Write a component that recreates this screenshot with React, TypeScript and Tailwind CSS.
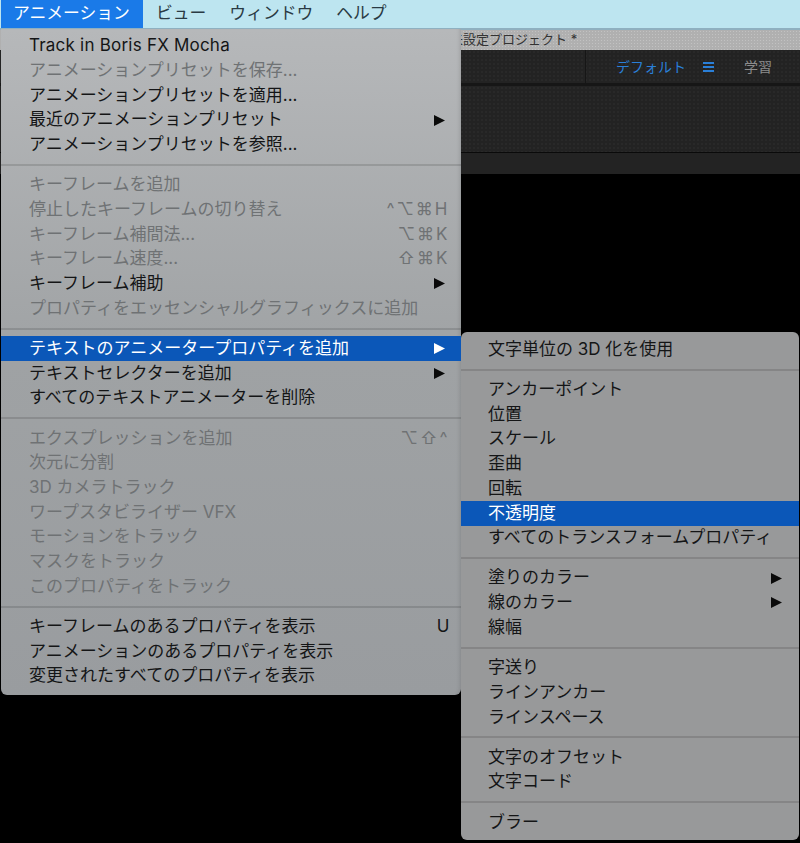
import React from "react";

type Item = {
  label: string;
  disabled?: boolean;
  shortcut?: string;
  arrow?: boolean;
  active?: boolean;
  tracking?: string;
};

const mainMenu: Item[][] = [
  [
    { label: "Track in Boris FX Mocha", tracking: "tracking-[0.22px]" },
    { label: "アニメーションプリセットを保存...", disabled: true },
    { label: "アニメーションプリセットを適用..." },
    { label: "最近のアニメーションプリセット", arrow: true },
    { label: "アニメーションプリセットを参照..." },
  ],
  [
    { label: "キーフレームを追加", disabled: true },
    { label: "停止したキーフレームの切り替え", disabled: true, shortcut: "^⌥⌘H" },
    { label: "キーフレーム補間法...", disabled: true, shortcut: "⌥⌘K" },
    { label: "キーフレーム速度...", disabled: true, shortcut: "⇧⌘K" },
    { label: "キーフレーム補助", arrow: true },
    { label: "プロパティをエッセンシャルグラフィックスに追加", disabled: true },
  ],
  [
    { label: "テキストのアニメータープロパティを追加", arrow: true, active: true },
    { label: "テキストセレクターを追加", arrow: true },
    { label: "すべてのテキストアニメーターを削除" },
  ],
  [
    { label: "エクスプレッションを追加", disabled: true, shortcut: "⌥⇧^" },
    { label: "次元に分割", disabled: true },
    { label: "3D カメラトラック", disabled: true },
    { label: "ワープスタビライザー VFX", disabled: true },
    { label: "モーションをトラック", disabled: true },
    { label: "マスクをトラック", disabled: true },
    { label: "このプロパティをトラック", disabled: true },
  ],
  [
    { label: "キーフレームのあるプロパティを表示", shortcut: "U" },
    { label: "アニメーションのあるプロパティを表示" },
    { label: "変更されたすべてのプロパティを表示" },
  ],
];

const subMenu: Item[][] = [
  [{ label: "文字単位の 3D 化を使用" }],
  [
    { label: "アンカーポイント" },
    { label: "位置" },
    { label: "スケール" },
    { label: "歪曲" },
    { label: "回転" },
    { label: "不透明度", active: true },
    { label: "すべてのトランスフォームプロパティ" },
  ],
  [
    { label: "塗りのカラー", arrow: true },
    { label: "線のカラー", arrow: true },
    { label: "線幅" },
  ],
  [{ label: "字送り" }, { label: "ラインアンカー" }, { label: "ラインスペース" }],
  [{ label: "文字のオフセット" }, { label: "文字コード" }],
  [{ label: "ブラー" }],
];

const Arrow = ({ className }: { className: string }) => (
  <svg width="11" height="11" viewBox="0 0 11 11" className={`shrink-0 ${className}`}>
    <polygon points="0,0 11,5.5 0,11" fill="currentColor" />
  </svg>
);

const MenuRow = ({ item, inset, arrowGap }: { item: Item; inset: string; arrowGap: string }) => {
  let color = "text-[#141516]";
  if (item.disabled) color = "text-[#6f7274]";
  if (item.active) color = "text-white bg-[#0b57b8]";
  return (
    <div className={`flex h-[24.7px] items-center justify-between ${inset} ${color}`}>
      <span className={`whitespace-nowrap ${item.tracking ?? ""}`}>{item.label}</span>
      {item.shortcut && (
        <span className={`whitespace-nowrap ${item.shortcut.length > 1 ? "tracking-[2px]" : ""}`}>
          {item.shortcut}
        </span>
      )}
      {item.arrow && <Arrow className={`${arrowGap} ${item.active ? "text-white" : "text-[#0a0a0a]"}`} />}
    </div>
  );
};

const MenuGroups = ({ groups, inset, arrowGap }: { groups: Item[][]; inset: string; arrowGap: string }) => (
  <>
    {groups.map((group, i) => (
      <div key={i}>
        {i > 0 && (
          <div className="flex h-[15.6px] items-center">
            <div className="h-[2px] w-full bg-[#00000020]" />
          </div>
        )}
        {group.map((item) => (
          <MenuRow key={item.label} item={item} inset={inset} arrowGap={arrowGap} />
        ))}
      </div>
    ))}
  </>
);

export default function App() {
  return (
    <div className="relative flex h-[843px] w-[800px] flex-col overflow-hidden bg-black font-['Inter','Noto_Sans_CJK_JP','DejaVu_Sans',sans-serif] text-[17px]">
      {/* menu bar */}
      <div className="flex h-[28px] shrink-0 items-center bg-[#bde5f0] text-[16.8px] text-[#2a3a44]">
        <div className="ml-[1px] flex h-full w-[142px] items-center bg-[#1a7ae8] pl-[12px] text-white">
          アニメーション
        </div>
        <span className="ml-[13px]">ビュー</span>
        <span className="ml-[23px]">ウィンドウ</span>
        <span className="ml-[23px]">ヘルプ</span>
      </div>

      {/* app window behind the menus */}
      <div className="h-[2px] shrink-0 bg-[#8fb0c0]" />
      <div className="flex h-[20px] shrink-0 items-center bg-[#b0b0b0] bg-[radial-gradient(#c2c2c2_1px,transparent_1px)] bg-[length:3px_3px] pl-[450px] text-[13px] text-[#333333]">
        <span>未設定プロジェクト *</span>
      </div>
      <div className="flex h-[33px] shrink-0 items-center bg-[#232323] bg-[radial-gradient(#292929_1px,transparent_1px)] bg-[length:4px_4px] text-[14px]">
        <div className="h-full w-[586px] border-r border-[#161616]" />
        <span className="ml-[30px] text-[#2a7fd8]">デフォルト</span>
        <div className="ml-[17px] flex w-[11px] flex-col gap-[2px]">
          <div className="h-[2px] bg-[#2a7fd8]" />
          <div className="h-[2px] bg-[#2a7fd8]" />
          <div className="h-[2px] bg-[#2a7fd8]" />
        </div>
        <span className="ml-[30px] text-[#8c8c8c]">学習</span>
      </div>
      <div className="h-[3px] shrink-0 bg-[#161616]" />
      <div className="h-[66px] shrink-0 bg-[#232323] bg-[radial-gradient(#292929_1px,transparent_1px)] bg-[length:4px_4px]" />
      <div className="h-[1px] shrink-0 bg-[#0a0a0a]" />
      <div className="h-[21px] shrink-0 bg-[#232323]" />

      {/* animation menu */}
      <div className="absolute left-[1px] top-[29px] h-[666px] w-[459.5px] rounded-b-[6px] bg-gradient-to-b from-[#b6b8ba] via-[#9fa2a4] to-[#999c9f] pt-[4.6px] shadow-[inset_-4px_0_4px_-3px_#00000022]">
        <MenuGroups groups={mainMenu} inset="pl-[28px] pr-[11px]" arrowGap="mr-[5px]" />
      </div>

      {/* text animator submenu */}
      <div className="absolute left-[460.5px] top-[332px] h-[508px] w-[338.5px] rounded-[6px] bg-[#98999a] pt-[5.2px]">
        <MenuGroups groups={subMenu} inset="pl-[27.5px] pr-[17px]" arrowGap="mr-0" />
      </div>
    </div>
  );
}
